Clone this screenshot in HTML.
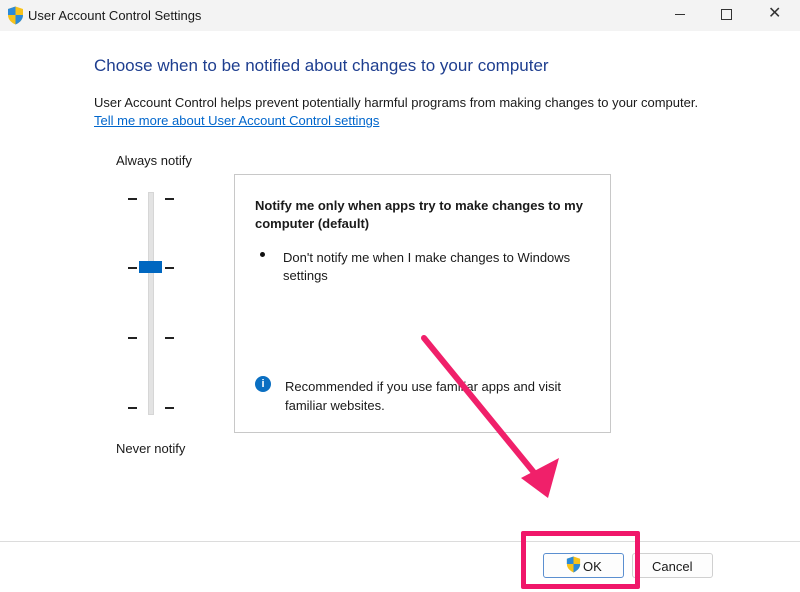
<!DOCTYPE html>
<html><head><style>
body{margin:0;width:800px;height:592px;position:relative;background:#fff;font-family:"Liberation Sans",sans-serif;overflow:hidden;color:#1a1a1a}
.a{position:absolute}
.t{font-size:13px}
.tick{position:absolute;width:9px;height:2px;background:#222}
</style></head><body>
<div class="a" style="left:0;top:0;width:800px;height:31px;background:#f3f3f3"></div>
<svg class="a" style="left:7px;top:6px" width="17" height="19" viewBox="0 0 17 19"><path d="M8.5 0.5L16 3v6c0 5-4 8-7.5 9.5C5 17 1 14 1 9V3z" fill="#f7c21a"/><path d="M8.5 0.5V9H1V3z" fill="#2b8ad8"/><path d="M8.5 9H16c0 5-4 8-7.5 9.5z" fill="#2b8ad8"/></svg>
<div class="a" style="left:28px;top:8px;font-size:13px">User Account Control Settings</div>
<div class="a" style="left:675px;top:14px;width:10px;height:1px;background:#333"></div>
<div class="a" style="left:721px;top:9px;width:9px;height:9px;border:1px solid #333"></div>
<div class="a" style="left:768px;top:3px;font-size:16px;color:#333">✕</div>
<div class="a" style="left:94px;top:56px;font-size:17px;color:#1e3e8f">Choose when to be notified about changes to your computer</div>
<div class="a t" style="left:94px;top:95px">User Account Control helps prevent potentially harmful programs from making changes to your computer.</div>
<div class="a t" style="left:94px;top:113px;color:#0066cc;text-decoration:underline">Tell me more about User Account Control settings</div>
<div class="a t" style="left:116px;top:153px">Always notify</div>
<div class="a t" style="left:116px;top:441px">Never notify</div>
<div class="a" style="left:148px;top:192px;width:4px;height:221px;background:#e3e3e3;border:1px solid #d6d6d6"></div>
<div class="tick" style="left:128px;top:198px"></div><div class="tick" style="left:165px;top:198px"></div>
<div class="tick" style="left:128px;top:267px"></div><div class="tick" style="left:165px;top:267px"></div>
<div class="tick" style="left:128px;top:337px"></div><div class="tick" style="left:165px;top:337px"></div>
<div class="tick" style="left:128px;top:407px"></div><div class="tick" style="left:165px;top:407px"></div>
<div class="a" style="left:139px;top:261px;width:23px;height:12px;background:#0067c0"></div>
<div class="a" style="left:234px;top:174px;width:375px;height:257px;border:1px solid #c8c8c8"></div>
<div class="a t" style="left:255px;top:197px;font-weight:bold;line-height:18px;width:345px">Notify me only when apps try to make changes to my computer (default)</div>
<div class="a" style="left:260px;top:252px;width:5px;height:5px;border-radius:50%;background:#111"></div>
<div class="a t" style="left:283px;top:249px;line-height:18px;width:310px">Don't notify me when I make changes to Windows settings</div>
<div class="a" style="left:255px;top:376px;width:16px;height:16px;border-radius:50%;background:#0a6fc2;color:#fff;font-size:11px;font-weight:bold;text-align:center;line-height:16px">i</div>
<div class="a t" style="left:285px;top:377px;line-height:19px;width:310px">Recommended if you use familiar apps and visit familiar websites.</div>
<div class="a" style="left:0;top:541px;width:800px;height:1px;background:#dcdcdc"></div>
<div class="a" style="left:543px;top:553px;width:79px;height:23px;border:1px solid #5b8fd0;border-radius:3px;background:#fdfdfd"></div>
<svg class="a" style="left:566px;top:556px" width="15" height="17" viewBox="0 0 17 19"><path d="M8.5 0.5L16 3v6c0 5-4 8-7.5 9.5C5 17 1 14 1 9V3z" fill="#f7c21a"/><path d="M8.5 0.5V9H1V3z" fill="#2b8ad8"/><path d="M8.5 9H16c0 5-4 8-7.5 9.5z" fill="#2b8ad8"/></svg>
<div class="a t" style="left:583px;top:559px">OK</div>
<div class="a" style="left:632px;top:553px;width:79px;height:23px;border:1px solid #d0d0d0;border-radius:3px;background:#fdfdfd"></div>
<div class="a t" style="left:652px;top:559px">Cancel</div>
<div class="a" style="left:521px;top:531px;width:109px;height:48px;border:5px solid #f0176a;border-radius:2px"></div>
<svg class="a" style="left:0;top:0" width="800" height="592"><line x1="424" y1="338" x2="536" y2="475" stroke="#f0206a" stroke-width="6" stroke-linecap="round"/><path d="M521 478L559 458L548 498z" fill="#f0206a"/></svg>
</body></html>
